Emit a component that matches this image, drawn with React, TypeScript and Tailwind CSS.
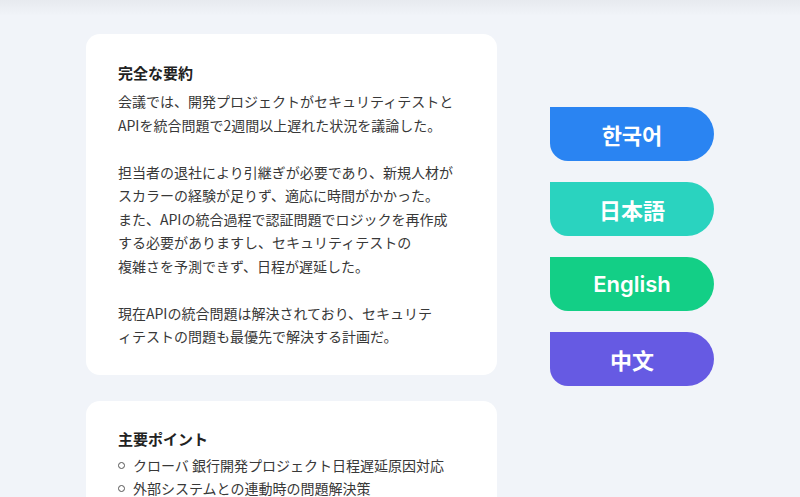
import React from "react";

const font = { fontFamily: '"Noto Sans CJK JP", "Noto Sans", sans-serif' };

function Bullet() {
  return <span className="inline-block w-[7px] h-[7px] rounded-full border-[1.5px] border-[#555] mr-[8px] shrink-0" />;
}

export default function App() {
  const langs = [
    { label: "한국어", cls: "bg-[#2a84f2]", f: '"Noto Sans CJK KR", sans-serif' },
    { label: "日本語", cls: "bg-[#2ad3bf]", f: '"Noto Sans CJK JP", sans-serif' },
    { label: "English", cls: "bg-[#13cf86]", f: 'Inter, "Noto Sans", sans-serif' },
    { label: "中文", cls: "bg-[#665ae3]", f: '"Noto Sans CJK SC", sans-serif' },
  ];
  return (
    <div
      className="w-[800px] h-[497px] overflow-hidden bg-[linear-gradient(to_bottom,#e7eaef_0px,#f1f4f9_16px)] flex"
      style={font}
    >
      <div className="ml-[86px] pt-[34px] flex flex-col gap-[26px] w-[411px]">
        <div className="bg-white rounded-[14px] pl-[32px] pr-[20px] pt-[28px] pb-[26px] text-[#383838]">
          <div className="text-[15px] font-bold text-[#222] leading-[22px] mb-[6px]">完全な要約</div>
          <div className="text-[14px] leading-[23.5px]">
            <p>会議では、開発プロジェクトがセキュリティテストと<br />APIを統合問題で2週間以上遅れた状況を議論した。</p>
            <p className="mt-[23.5px]">
              担当者の退社により引継ぎが必要であり、新規人材が<br />
              スカラーの経験が足りず、適応に時間がかかった。<br />
              また、APIの統合過程で認証問題でロジックを再作成<br />
              する必要がありますし、セキュリティテストの<br />
              複雑さを予測できず、日程が遅延した。
            </p>
            <p className="mt-[23.5px]">
              現在APIの統合問題は解決されており、セキュリテ<br />
              ィテストの問題も最優先で解決する計画だ。
            </p>
          </div>
        </div>
        <div className="bg-white rounded-[14px] pl-[32px] pr-[20px] pt-[27px] pb-[27px] text-[#383838]">
          <div className="text-[15px] font-bold text-[#222] leading-[22px] mb-[4px]">主要ポイント</div>
          <ul className="text-[14px] leading-[23.5px]">
            <li className="flex items-center"><Bullet />クローバ 銀行開発プロジェクト日程遅延原因対応</li>
            <li className="flex items-center"><Bullet />外部システムとの連動時の問題解決策</li>
            <li className="flex items-center"><Bullet />セキュリティテストの優先対応計画</li>
          </ul>
        </div>
      </div>
      <div className="ml-[53px] pt-[107px] flex flex-col gap-[21px]">
        {langs.map((l) => (
          <div
            key={l.label}
            className={`${l.cls} w-[164px] h-[54px] rounded-[0_27px_27px_18px] flex items-center justify-center text-white text-[22px] font-semibold`}
            style={{ fontFamily: l.f }}
          >
            {l.label}
          </div>
        ))}
      </div>
    </div>
  );
}
